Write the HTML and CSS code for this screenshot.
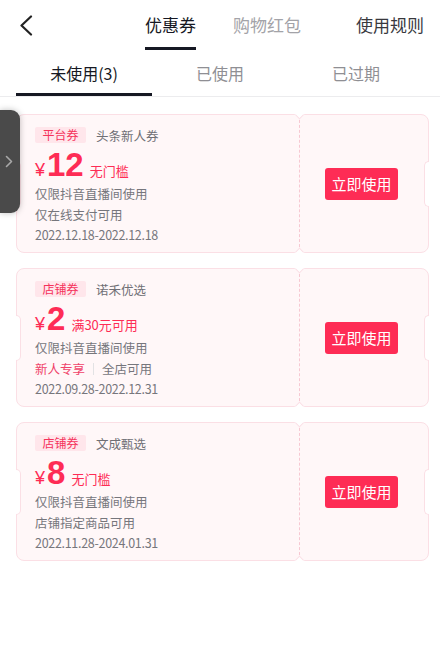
FILE: index.html
```html
<!DOCTYPE html>
<html lang="zh-CN">
<head>
    <meta charset="UTF-8">
    <meta name="viewport" content="width=device-width, initial-scale=1.0">
    <title>优惠券</title>
    <link rel="stylesheet" href="styles.css">
</head>
<body>
    <!-- En-tête -->
    <header class="topbar">
        <a class="back" href="#">
            <svg width="14" height="21" viewBox="0 0 14 21"><polyline points="12,1.5 2.5,10.5 12,19.5" fill="none" stroke="#222" stroke-width="2.2" stroke-linecap="round" stroke-linejoin="round"/></svg>
        </a>
        <nav class="top-tabs">
            <span class="top-tab active">优惠券</span>
            <span class="top-tab">购物红包</span>
        </nav>
        <a class="rules" href="#">使用规则</a>
    </header>

    <div class="sub-tabs">
        <span class="sub-tab active">未使用(3)</span>
        <span class="sub-tab">已使用</span>
        <span class="sub-tab">已过期</span>
    </div>

    <!-- Liste des coupons -->
    <div class="coupon-list">
        <div class="coupon">
            <div class="coupon-main">
                <div class="coupon-head"><span class="tag">平台券</span><span class="shop">头条新人券</span></div>
                <div class="price"><span class="yen">¥</span><span class="amount">12</span><span class="cond">无门槛</span></div>
                <p class="line">仅限抖音直播间使用</p>
                <p class="line">仅在线支付可用</p>
                <p class="line date">2022.12.18-2022.12.18</p>
            </div>
            <div class="coupon-side"><button class="use-btn">立即使用</button></div>
        </div>

        <div class="coupon">
            <div class="coupon-main">
                <div class="coupon-head"><span class="tag">店铺券</span><span class="shop">诺禾优选</span></div>
                <div class="price"><span class="yen">¥</span><span class="amount">2</span><span class="cond">满30元可用</span></div>
                <p class="line">仅限抖音直播间使用</p>
                <p class="line"><span class="hot">新人专享</span><span class="sep"></span>全店可用</p>
                <p class="line date">2022.09.28-2022.12.31</p>
            </div>
            <div class="coupon-side"><button class="use-btn">立即使用</button></div>
        </div>

        <div class="coupon">
            <div class="coupon-main">
                <div class="coupon-head"><span class="tag">店铺券</span><span class="shop">文成甄选</span></div>
                <div class="price"><span class="yen">¥</span><span class="amount">8</span><span class="cond">无门槛</span></div>
                <p class="line">仅限抖音直播间使用</p>
                <p class="line">店铺指定商品可用</p>
                <p class="line date">2022.11.28-2024.01.31</p>
            </div>
            <div class="coupon-side"><button class="use-btn">立即使用</button></div>
        </div>
    </div>

    <!-- Onglet flottant -->
    <div class="side-handle">
        <svg width="8" height="13" viewBox="0 0 8 13"><polyline points="1.5,1.5 6.5,6.5 1.5,11.5" fill="none" stroke="#a8a8a8" stroke-width="1.6" stroke-linecap="round" stroke-linejoin="round"/></svg>
    </div>
</body>
</html>
```

FILE: styles.css
```css
/* CSS */
body {
    font-family: "Noto Sans CJK SC", "Noto Sans", sans-serif;
    background-color: #fff;
    color: #161823;
    margin: 0;
    padding: 0;
}

.topbar {
    display: grid;
    grid-template-columns: 1fr auto 1fr;
    align-items: start;
    height: 50px;
    padding: 0 16px 0 22px;
}

.back {
    display: flex;
    padding-top: 15px;
    margin-left: -3px;
}

.top-tabs {
    display: flex;
    gap: 37px;
}

.top-tab {
    font-size: 17px;
    line-height: 24px;
    padding: 13px 0 10px;
    color: #a3a3a8;
    border-bottom: 3px solid transparent;
}

.top-tab.active {
    color: #161823;
    border-bottom-color: #161823;
}

.rules {
    justify-self: end;
    font-size: 17px;
    line-height: 24px;
    padding-top: 13px;
    color: #38383d;
    text-decoration: none;
}

.sub-tabs {
    display: grid;
    grid-template-columns: repeat(3, 1fr);
    padding: 0 16px;
    border-bottom: 1px solid #ececee;
}

.sub-tab {
    text-align: center;
    font-size: 16px;
    line-height: 22px;
    padding: 12px 0 9px;
    color: #8f8f94;
    border-bottom: 3px solid transparent;
}

.sub-tab.active {
    color: #161823;
    border-bottom-color: #161823;
}

.coupon-list {
    padding: 17px 11px 0 16px;
}

.coupon {
    position: relative;
    display: flex;
    height: 139px;
    box-sizing: border-box;
    margin-bottom: 15px;
    background-color: #fff7f8;
    border: 1px solid #fbdfe5;
    border-radius: 8px;
}

/* encoches latérales */
.coupon::before,
.coupon::after {
    content: "";
    position: absolute;
    top: 50%;
    margin-top: -23px;
    width: 4px;
    height: 44px;
    background-color: #fff;
    border: 1px solid #fbdfe5;
}

.coupon::before {
    left: -1px;
    border-left: none;
    border-radius: 0 5px 5px 0;
}

.coupon::after {
    right: -1px;
    border-right: none;
    border-radius: 5px 0 0 5px;
}

.coupon-main {
    width: 282px;
    box-sizing: border-box;
    padding: 12px 0 0 18px;
}

.coupon-head {
    display: flex;
    align-items: center;
    height: 16px;
}

.tag {
    font-size: 12px;
    line-height: 16px;
    padding: 0 7.5px;
    color: #f5335b;
    background-color: #ffe6eb;
    border-radius: 2px;
}

.shop {
    margin-left: 10px;
    font-size: 12.5px;
    color: #6f6f75;
}

.price {
    display: flex;
    align-items: baseline;
    height: 36px;
    margin-top: 4px;
    color: #fe2c55;
}

.yen {
    font-family: "Liberation Sans", Arial, sans-serif;
    font-size: 18px;
    margin-right: 2px;
}

.amount {
    font-family: "Liberation Sans", Arial, sans-serif;
    font-size: 33px;
    font-weight: bold;
    line-height: 36px;
}

.cond {
    margin-left: 6px;
    font-size: 13px;
}

.line {
    margin: 0;
    font-size: 12.5px;
    line-height: 20.5px;
    color: #76767c;
    display: flex;
    align-items: center;
}

.line:first-of-type {
    margin-top: 1px;
}

.line.date {
    letter-spacing: -0.3px;
}

.hot {
    color: #f0436a;
}

.sep {
    width: 1px;
    height: 12px;
    margin: 0 8px;
    background-color: #e2e2e4;
}

.coupon-side {
    position: relative;
    width: 129px;
    box-sizing: border-box;
    border-left: 1px dashed #f7c8d2;
    display: flex;
    align-items: center;
    justify-content: center;
    padding-right: 5px;
}

/* petites encoches en V */
.coupon-side::before,
.coupon-side::after {
    content: "";
    position: absolute;
    left: -4px;
    width: 5px;
    height: 5px;
    background-color: #fff;
    border: 1px solid #fbdfe5;
    border-top-color: transparent;
    border-left-color: transparent;
    transform: rotate(45deg);
}

.coupon-side::before {
    top: -4px;
}

.coupon-side::after {
    bottom: -4px;
    transform: rotate(225deg);
}

.use-btn {
    font-family: inherit;
    font-size: 15px;
    line-height: 32px;
    height: 32px;
    padding: 0 6px;
    color: #fff;
    background-color: #fe2c55;
    border: none;
    border-radius: 3px;
    cursor: pointer;
}

.side-handle {
    position: fixed;
    left: 0;
    top: 110px;
    width: 20px;
    height: 103px;
    background-color: #4a4a4a;
    border-radius: 0 9px 9px 0;
    box-shadow: 0 0 6px rgba(0, 0, 0, 0.25);
    display: flex;
    align-items: center;
    justify-content: center;
    padding-right: 2px;
    box-sizing: border-box;
}
```
